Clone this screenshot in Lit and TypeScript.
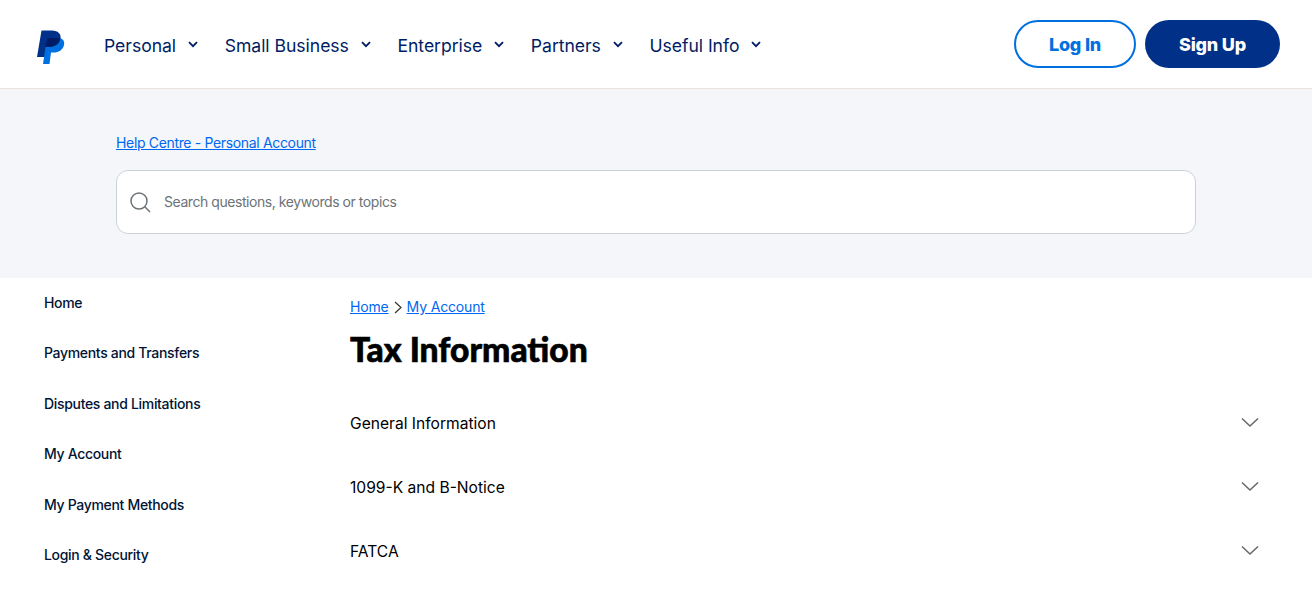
import { LitElement, html, css } from "lit";
import { customElement } from "lit/decorators.js";

const navItems = ["Personal", "Small Business", "Enterprise", "Partners", "Useful Info"];
const sideItems = ["Home", "Payments and Transfers", "Disputes and Limitations", "My Account", "My Payment Methods", "Login & Security"];
const rows = ["General Information", "1099-K and B-Notice", "FATCA"];

@customElement("app-root")
export class AppRoot extends LitElement {
  static styles = css`
    :host { display: block; height: 600px; overflow: hidden; background: #fff; font-family: Inter, "Liberation Sans", sans-serif; color: #000; }
    a { color: inherit; }
    .header { height: 88px; display: flex; align-items: center; padding: 0 32px 0 36px; border-bottom: 1px solid #eae3dc; box-sizing: content-box; }
    .logo { width: 30px; height: 36px; display: block; margin-top: 6px; }
    .nav { display: flex; margin-left: 38px; margin-top: 2px; gap: 26.6px; flex: 1; }
    .nav-item { display: flex; align-items: center; gap: 12px; font-size: 17.6px; color: #001c64; letter-spacing: -0.04px; }
    .nav-item svg { width: 10px; height: 7px; display: block; margin-top: -2px; }
    .btn { box-sizing: border-box; height: 48px; border-radius: 24px; display: flex; align-items: center; justify-content: center; font-size: 18px; font-weight: 800; letter-spacing: -0.2px; }
    .login { width: 122px; border: 2px solid #0070e0; color: #0070e0; margin-right: 9px; }
    .signup { width: 135px; background: #003087; color: #fff; }
    .hero { height: 189px; background: #f5f6fa; padding: 44px 116px 0; box-sizing: border-box; }
    .hero-link { display: block; font-size: 14px; line-height: 20px; color: #0068f0; letter-spacing: -0.34px; }
    .search { box-sizing: border-box; width: 1080px; height: 64px; margin-top: 17px; background: #fff; border: 1px solid #cbd2d6; border-radius: 12px; display: flex; align-items: center; padding: 0 0 2px 12px; gap: 13px; font-size: 14px; color: #6c7378; letter-spacing: -0.44px; }
    .search svg { width: 22px; height: 22px; display: block; margin-top: 2px; }
    .content { display: flex; }
    .side { width: 306px; padding-left: 44px; box-sizing: content-box; display: flex; flex-direction: column; padding-top: 15px; gap: 30.4px; }
    .side-item { font-size: 14px; line-height: 20px; font-weight: 500; color: #001435; letter-spacing: -0.32px; }
    .main { flex: 1; padding-right: 53px; padding-top: 19px; }
    .crumbs { display: flex; align-items: center; gap: 5px; font-size: 14px; line-height: 20px; color: #0068f0; letter-spacing: -0.16px; }
    .crumbs svg { width: 8px; height: 13px; display: block; }
    h1 { margin: 12px 0 0; font-family: Lato, sans-serif; font-weight: 900; font-size: 33.6px; line-height: 40px; color: #000; -webkit-text-stroke: 0.6px #000; }
    .rows { margin-top: 22px; }
    .row { height: 64px; display: flex; align-items: center; justify-content: space-between; font-size: 15.6px; color: #000; }
    .row svg { width: 18px; height: 11px; display: block; margin-top: -2px; }
  `;

  render() {
    return html`
      <div class="header">
        <svg class="logo" viewBox="0 0 30 36" aria-label="PayPal">
          <path fill="#003087" d="M5.500 1.500H16C22 1.500 25.500 5 24.500 10C23.500 16 18.500 19 12.500 19H11.500L9.500 28H1Z"/>
          <path fill="#0070e0" d="M11 9H22.500C26.500 9 29 12 28 16C27 21 22.500 23.500 17.500 23.500H15L13.500 35H7Z"/>
          <path fill="#001c64" d="M11 9H24.400C23.500 15.500 18.500 18 12.500 18H9.200Z"/>
        </svg>
        <nav class="nav">
          ${navItems.map((n) => html`
            <div class="nav-item">${n}
              <svg viewBox="0 0 10 7"><path d="M1 1.200L5 5.200L9 1.200" fill="none" stroke="#001c64" stroke-width="1.800"/></svg>
            </div>`)}
        </nav>
        <div class="btn login">Log In</div>
        <div class="btn signup">Sign Up</div>
      </div>
      <div class="hero">
        <a class="hero-link" href="#">Help Centre - Personal Account</a>
        <div class="search">
          <svg viewBox="0 0 22 22"><circle cx="10" cy="10" r="8" fill="none" stroke="#6c7378" stroke-width="1.500"/><path d="M15.800 15.800L21 21" stroke="#6c7378" stroke-width="1.500"/></svg>
          <span>Search questions, keywords or topics</span>
        </div>
      </div>
      <div class="content">
        <div class="side">${sideItems.map((s) => html`<div class="side-item">${s}</div>`)}</div>
        <div class="main">
          <div class="crumbs">
            <a href="#">Home</a>
            <svg viewBox="0 0 8 13"><path d="M1 1L7 6.500L1 12" fill="none" stroke="#333" stroke-width="1.200"/></svg>
            <a href="#">My Account</a>
          </div>
          <h1>Tax Information</h1>
          <div class="rows">
            ${rows.map((r) => html`
              <div class="row">${r}
                <svg viewBox="0 0 18 11"><path d="M1 1.500L9 9L17 1.500" fill="none" stroke="#666" stroke-width="1.500"/></svg>
              </div>`)}
          </div>
        </div>
      </div>
    `;
  }
}
